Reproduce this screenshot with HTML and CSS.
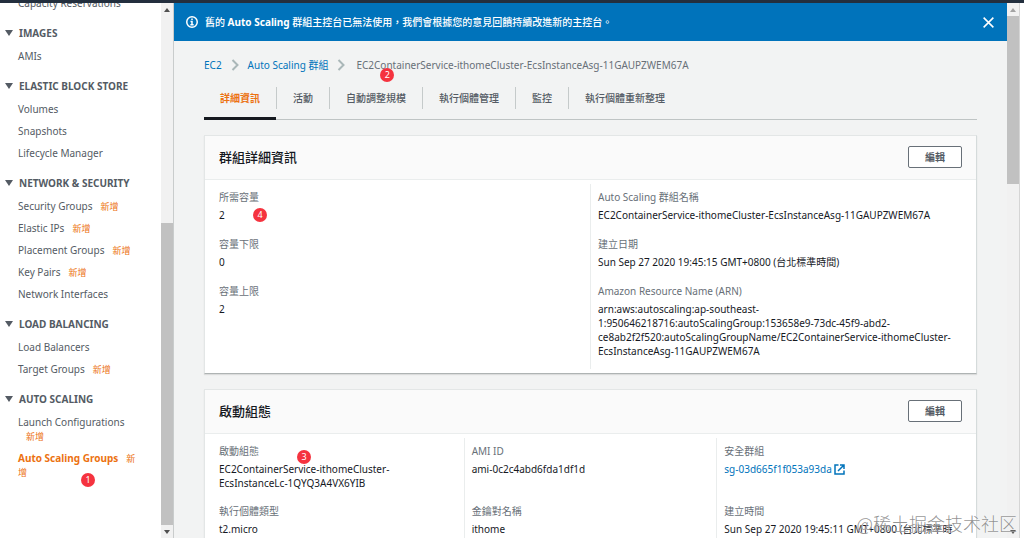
FILE: index.html
```html
<!DOCTYPE html>
<html lang="zh-Hant">
<head>
<meta charset="utf-8">
<title>Auto Scaling 群組 | EC2</title>
<link rel="stylesheet" href="styles.css">
</head>
<body>
<div class="app">
  <div class="topbar"></div>
  <div class="shell">
    <nav class="sidebar">
      <div class="nav">
        <ul class="nav-list"><li><a href="#">Capacity Reservations</a></li></ul>
        <h3 class="nav-title"><span class="caret"></span>IMAGES</h3>
        <ul class="nav-list"><li><a href="#">AMIs</a></li></ul>
        <h3 class="nav-title"><span class="caret"></span>ELASTIC BLOCK STORE</h3>
        <ul class="nav-list">
          <li><a href="#">Volumes</a></li>
          <li><a href="#">Snapshots</a></li>
          <li><a href="#">Lifecycle Manager</a></li>
        </ul>
        <h3 class="nav-title"><span class="caret"></span>NETWORK &amp; SECURITY</h3>
        <ul class="nav-list">
          <li><a href="#">Security Groups</a><span class="new">新增</span></li>
          <li><a href="#">Elastic IPs</a><span class="new">新增</span></li>
          <li><a href="#">Placement Groups</a><span class="new">新增</span></li>
          <li><a href="#">Key Pairs</a><span class="new">新增</span></li>
          <li><a href="#">Network Interfaces</a></li>
        </ul>
        <h3 class="nav-title"><span class="caret"></span>LOAD BALANCING</h3>
        <ul class="nav-list">
          <li><a href="#">Load Balancers</a></li>
          <li><a href="#">Target Groups</a><span class="new">新增</span></li>
        </ul>
        <h3 class="nav-title"><span class="caret"></span>AUTO SCALING</h3>
        <ul class="nav-list">
          <li><a href="#">Launch Configurations</a><wbr><span class="new">新增</span></li>
          <li class="marked"><a href="#" class="active">Auto Scaling Groups</a><span class="new">新增</span><span class="pin pin-1">1</span></li>
        </ul>
      </div>
    </nav>
    <div class="scrollbar scrollbar-side" aria-hidden="true">
      <span class="arrow arrow-up"></span><span class="track-before"></span><span class="thumb"></span><span class="arrow arrow-down"></span>
    </div>
    <main class="main">
      <div class="banner">
        <svg class="banner-icon" viewBox="0 0 16 16" fill="none" stroke="currentColor" stroke-width="2"><circle cx="8" cy="8" r="7"/><path d="M8 3.2v2.2M6 7.3h2v4M5.8 11.8h4.4"/></svg>
        <p class="banner-text">舊的 <strong>Auto Scaling</strong> 群組主控台已無法使用，我們會根據您的意見回饋持續改進新的主控台。</p>
        <button class="close" type="button" aria-label="關閉"><svg viewBox="0 0 12 12" fill="none" stroke="currentColor" stroke-width="1.4"><path d="M1.5 1.5l9 9M10.5 1.5l-9 9"/></svg></button>
      </div>
      <div class="content">
        <div class="crumbs">
          <a href="#">EC2</a>
          <svg class="chevron" viewBox="0 0 8 12"><path d="M1.5 1l5 5-5 5"/></svg>
          <a href="#">Auto Scaling 群組</a>
          <svg class="chevron" viewBox="0 0 8 12"><path d="M1.5 1l5 5-5 5"/></svg>
          <span class="current">EC2ContainerService-ithomeCluster-EcsInstanceAsg-11GAUPZWEM67A<span class="pin pin-2">2</span></span>
        </div>
        <div class="tabs" role="tablist">
          <button class="tab selected" type="button" role="tab" aria-selected="true">詳細資訊</button>
          <button class="tab" type="button" role="tab">活動</button>
          <button class="tab" type="button" role="tab">自動調整規模</button>
          <button class="tab" type="button" role="tab">執行個體管理</button>
          <button class="tab" type="button" role="tab">監控</button>
          <button class="tab" type="button" role="tab">執行個體重新整理</button>
        </div>
        <section class="panel">
          <header class="panel-head"><h2>群組詳細資訊</h2><button class="edit" type="button">編輯</button></header>
          <div class="columns two">
            <dl class="column">
              <div class="field"><dt>所需容量</dt><dd class="marked">2<span class="pin pin-4">4</span></dd></div>
              <div class="field"><dt>容量下限</dt><dd>0</dd></div>
              <div class="field"><dt>容量上限</dt><dd>2</dd></div>
            </dl>
            <dl class="column">
              <div class="field"><dt>Auto Scaling 群組名稱</dt><dd>EC2ContainerService-ithomeCluster-EcsInstanceAsg-11GAUPZWEM67A</dd></div>
              <div class="field"><dt>建立日期</dt><dd>Sun Sep 27 2020 19:45:15 GMT+0800 (台北標準時間)</dd></div>
              <div class="field"><dt>Amazon Resource Name (ARN)</dt><dd>arn:aws:autoscaling:ap-southeast-<wbr>1:950646218716:autoScalingGroup:153658e9-73dc-45f9-abd2-<wbr>ce8ab2f2f520:autoScalingGroupName/EC2ContainerService-ithomeCluster-<wbr>EcsInstanceAsg-11GAUPZWEM67A</dd></div>
            </dl>
          </div>
        </section>
        <section class="panel">
          <header class="panel-head"><h2>啟動組態</h2><button class="edit" type="button">編輯</button></header>
          <div class="columns three">
            <div class="cell"><dl class="field"><dt>啟動組態</dt><dd class="marked">EC2ContainerService-ithomeCluster-<wbr>EcsInstanceLc-1QYQ3A4VX6YIB<span class="pin pin-3">3</span></dd></dl></div>
            <div class="cell"><dl class="field"><dt>AMI ID</dt><dd>ami-0c2c4abd6fda1df1d</dd></dl></div>
            <div class="cell"><dl class="field"><dt>安全群組</dt><dd><a href="#">sg-03d665f1f053a93da <svg class="external" viewBox="0 0 11 11" fill="none" stroke="currentColor" stroke-width="1.5"><path d="M4.5 1H1v9h9V6.5M6 1h4v4M10 1L4 7"/></svg></a></dd></dl></div>
            <div class="cell"><dl class="field"><dt>執行個體類型</dt><dd>t2.micro</dd></dl></div>
            <div class="cell"><dl class="field"><dt>金鑰對名稱</dt><dd>ithome</dd></dl></div>
            <div class="cell"><dl class="field"><dt>建立時間</dt><dd>Sun Sep 27 2020 19:45:11 GMT+0800 (台北標準時間)</dd></dl></div>
          </div>
        </section>
      </div>
    </main>
    <div class="scrollbar scrollbar-main" aria-hidden="true">
      <span class="arrow arrow-up muted"></span><span class="thumb"></span><span class="track-after"></span><span class="arrow arrow-down"></span>
    </div>
  </div>
  <div class="watermark">@稀土掘金技术社区</div>
</div>
</body>
</html>
```
FILE: styles.css
```css
* { box-sizing: border-box; margin: 0; padding: 0; }

body {
  font-family: "Noto Sans", "Noto Sans CJK TC", sans-serif;
  font-size: 10px;
  line-height: 14px;
  color: #16191f;
  background: #fff;
}

button { font: inherit; color: inherit; background: none; border: 0; cursor: pointer; }
a { color: #0073bb; text-decoration: none; }
ul { list-style: none; }

.app { position: relative; display: flex; flex-direction: column; height: 100vh; overflow: hidden; }
.topbar { flex: none; height: 3px; background: #232f3e; }
.shell { flex: 1; display: flex; min-height: 0; padding-right: 4px; }

/* Side navigation */
.sidebar { flex: none; width: 161px; overflow: hidden; }
.nav { margin-top: -11px; padding-right: 22px; }
.nav-list { padding-left: 18px; }
.nav-list li { padding: 4px 0; }
.nav-list a { color: #545b64; }
.nav-list a.active { color: #ec7211; font-weight: 700; }
.nav-title { display: flex; align-items: center; gap: 6px; margin-top: 7px; padding: 5px 0 5px 5px; font-size: 10px; font-weight: 700; color: #545b64; white-space: nowrap; }
.caret { border: 4px solid transparent; border-top: 6px solid #545b64; border-bottom: 0; }
.new { margin-left: 8px; font-size: 9px; line-height: 10px; color: #ec7211; }

/* Scrollbars */
.scrollbar { flex: none; display: flex; flex-direction: column; align-items: center; width: 13px; background: #f1f1f1; }
.scrollbar span { flex: none; }
.scrollbar-side { border-right: 1px solid #c9cccc; }
.scrollbar-main { border-right: 1px solid #d5d5d5; }
.arrow { width: 13px; height: 13px; display: flex; align-items: center; justify-content: center; }
.arrow::before { content: ""; border: 3px solid transparent; }
.arrow-up::before { border-top: 0; border-bottom: 4px solid #505050; }
.arrow-up.muted::before { border-bottom-color: #a3a3a3; }
.arrow-down::before { border-bottom: 0; border-top: 4px solid #505050; }
.scrollbar .thumb { width: 12px; background: #c1c1c1; }
.scrollbar .track-before { flex: 207 1 0; }
.scrollbar-side .thumb { flex: 302 1 0; }
.scrollbar-main .thumb { flex: 168 1 0; }
.scrollbar-main .track-after { flex: 341 1 0; }

/* Banner */
.main { flex: 1; min-width: 0; overflow: hidden; background: #f2f3f3; }
.banner { display: flex; align-items: center; gap: 7px; padding: 12px; background: #0073bb; color: #fff; }
.banner-icon { flex: none; width: 12px; height: 12px; }
.banner-text { flex: 1; font-weight: 500; }
.close { width: 13px; height: 13px; }
.close svg { display: block; width: 13px; height: 13px; }

.content { padding: 17px 30px; }
.crumbs { display: flex; align-items: center; gap: 9px; }
.crumbs .current { position: relative; margin-left: 2px; color: #687078; }
.chevron { width: 8px; height: 12px; fill: none; stroke: #aab7b8; stroke-width: 2; }

/* Tabs */
.tabs { display: flex; margin: 15px 0; border-bottom: 1px solid #bfc4c4; }
.tab { position: relative; padding: 4px 16px 12px; color: #545b64; font-weight: 500; line-height: 14px; border-bottom: 3px solid transparent; margin-bottom: -1px; }
.tab + .tab { margin-left: 1px; }
.tab:not(:last-child)::after { content: ""; position: absolute; right: -1px; top: 0; height: 22px; border-right: 1px solid #c5caca; }
.tab.selected { color: #ec7211; font-weight: 700; border-bottom-color: #16191f; }

/* Panels */
.panel { margin-bottom: 15px; background: #fff; border: 1px solid #e3e6e6; border-bottom-color: #aeb3b3; border-right-color: #d5dbdb; box-shadow: 0 1px 1px #00000018; }
.panel-head { display: flex; align-items: center; justify-content: space-between; padding: 10px 14px 11px; background: #fafafa; border-bottom: 1px solid #eaeded; }
.panel-head h2 { font-size: 13px; line-height: 20px; font-weight: 500; }
.edit { padding: 3px 16px; color: #545b64; font-weight: 700; background: #fff; border: 1px solid #687078; border-radius: 2px; }
.columns { display: grid; column-gap: 15px; padding: 4px 14px; }
.two { grid-template-columns: repeat(2, minmax(0, 1fr)); }
.three { grid-template-columns: repeat(3, minmax(0, 1fr)); }
.column { display: flex; flex-direction: column; gap: 15px; padding: 6px 0 11px; }
.column + .column { margin-left: -8px; padding-left: 7px; border-left: 1px solid #eaeded; }
.cell { padding: 6px 0 8px; }
.cell:not(:nth-child(3n + 1)) { margin-left: -8px; padding-left: 7px; border-left: 1px solid #eaeded; }
dt { margin-bottom: 4px; color: #687078; }
.marked { position: relative; }
.external { width: 11px; height: 11px; vertical-align: -2px; }

/* Numbered markers over the page */
.pin { position: absolute; width: 14px; height: 14px; border-radius: 50%; background: #f5333f; color: #fff; font-size: 9px; font-weight: 400; line-height: 14px; text-align: center; }
.pin-1 { left: 63px; top: 26px; }
.pin-2 { left: 24px; top: 10px; }
.pin-3 { left: 78px; top: -12px; }
.pin-4 { left: 34px; top: 0; }

.watermark { position: absolute; right: 7px; bottom: 3px; font-family: "Noto Sans CJK SC", sans-serif; font-size: 18px; line-height: 24px; font-weight: 300; color: #777c; text-shadow: 0 0 1px #fff; }
```
